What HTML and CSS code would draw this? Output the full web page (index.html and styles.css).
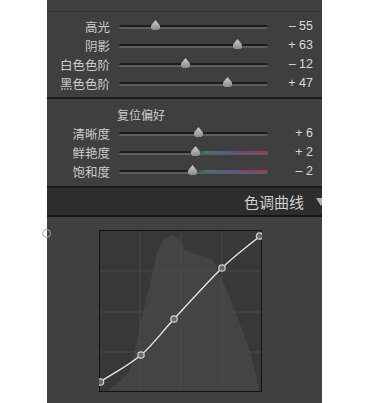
FILE: index.html
```html
<!DOCTYPE html>
<html lang="zh">
<head>
<meta charset="utf-8">
<link rel="stylesheet" href="styles.css">
</head>
<body>
<div class="panel">
  <div class="topstrip"></div>
  <div class="section s1">
    <div class="row"><span class="label">高光</span><div class="track"><span class="thumb" style="left:36px"></span></div><span class="val">– 55</span></div>
    <div class="row"><span class="label">阴影</span><div class="track"><span class="thumb" style="left:118px"></span></div><span class="val">+ 63</span></div>
    <div class="row"><span class="label">白色色阶</span><div class="track"><span class="thumb" style="left:66px"></span></div><span class="val">– 12</span></div>
    <div class="row"><span class="label">黑色色阶</span><div class="track"><span class="thumb" style="left:108px"></span></div><span class="val">+ 47</span></div>
  </div>
  <div class="section s2">
    <div class="row"><span class="label"></span><span class="reset">复位偏好</span><span class="val"></span></div>
    <div class="row"><span class="label">清晰度</span><div class="track"><span class="thumb" style="left:79px"></span></div><span class="val">+ 6</span></div>
    <div class="row"><span class="label">鲜艳度</span><div class="track color"><span class="thumb" style="left:76px"></span></div><span class="val">+ 2</span></div>
    <div class="row"><span class="label">饱和度</span><div class="track color"><span class="thumb" style="left:73px"></span></div><span class="val">– 2</span></div>
  </div>
  <div class="header"><span class="htitle">色调曲线</span><span class="tri"></span></div>
  <div class="curvepanel">
    <span class="pin"></span>
    <svg class="curve" width="163" height="162" viewBox="0 0 163 162">
      <rect x="0" y="0" width="163" height="162" fill="#383838"/>
      <path d="M8 161 L20 152 L30 142 L36 120 L41 94 L47 70 L53 45 L58 22 L64 10 L73 5 L80 10 L86 20 L95 24 L105 26 L114 30 L121 45 L128 61 L135 78 L141 94 L147 110 L152 125 L156 140 L160 161 Z" fill="#444444"/>
      <g stroke="#4a4a4a" stroke-width="1">
        <line x1="41" y1="0" x2="41" y2="162"/>
        <line x1="82" y1="0" x2="82" y2="162"/>
        <line x1="123" y1="0" x2="123" y2="162"/>
        <line x1="0" y1="41" x2="163" y2="41"/>
        <line x1="0" y1="82" x2="163" y2="82"/>
        <line x1="0" y1="122" x2="163" y2="122"/>
      </g>
      <rect x="0.5" y="0.5" width="162" height="161" fill="none" stroke="#111" stroke-width="1"/>
      <path d="M1 152 C14.7 143 29.7 135.5 42 125 C54.3 114.5 61.5 103.5 75 89 C88.5 74.5 108.7 51.8 123 38 C137.3 24.2 148.3 16.7 161 6" fill="none" stroke="#e6e6e6" stroke-width="1.4"/>
      <g fill="#6a6a6a" stroke="#cfcfcf" stroke-width="1.2">
        <circle cx="1.5" cy="152" r="3.2"/>
        <circle cx="42" cy="125" r="3.2"/>
        <circle cx="75" cy="89" r="3.2"/>
        <circle cx="123" cy="38" r="3.2"/>
        <circle cx="160.5" cy="6" r="3.2"/>
      </g>
    </svg>
  </div>
</div>
</body>
</html>
```
FILE: styles.css
```css
html, body {
  margin: 0;
  padding: 0;
  background: #ffffff;
}
body {
  width: 370px;
  height: 403px;
  overflow: hidden;
}
.panel {
  margin-left: 47px;
  width: 275px;
  height: 403px;
  background: #3f3f3f;
  display: flex;
  flex-direction: column;
  font-family: "Liberation Sans", "Noto Sans CJK SC", sans-serif;
  color: #cdcdcd;
}
.topstrip {
  height: 11px;
  border-bottom: 1px solid #363636;
  flex: none;
}
.section {
  padding: 5px 0;
  flex: none;
}
.s1 {
  border-bottom: 2px solid #1a1a1a;
  padding-bottom: 4px;
}
.s2 {
  padding-top: 6px;
  border-bottom: 2px solid #1a1a1a;
}
.row {
  display: grid;
  grid-template-columns: 63px 149px 1fr;
  column-gap: 9px;
  align-items: center;
  height: 19px;
}
.label {
  text-align: right;
  font-family: "Noto Sans CJK SC", sans-serif;
  font-size: 12.5px;
  color: #cbcbcb;
  line-height: 19px;
}
.reset {
  font-family: "Noto Sans CJK SC", sans-serif;
  font-size: 12px;
  color: #cbcbcb;
  margin-left: -2px;
  line-height: 19px;
}
.val {
  text-align: right;
  padding-right: 9px;
  font-size: 12.5px;
  color: #dadada;
  line-height: 19px;
}
.track {
  position: relative;
  height: 4px;
  border-radius: 2px;
  background: linear-gradient(#1c1c1c 0 50%, #5e5e5e 50% 100%);
  margin-top: 1px;
}
.track.color {
  background:
    linear-gradient(90deg, rgba(0,0,0,0) 0, rgba(0,0,0,0) 45%, #3f7a6e 58%, #4f5c9a 70%, #7a3f8c 84%, #b83050 100%) top/100% 50% no-repeat,
    linear-gradient(#1c1c1c 0 50%, #5e5e5e 50% 100%);
}
.thumb {
  position: absolute;
  top: -5px;
  width: 9px;
  height: 10px;
  margin-left: -4px;
  background: linear-gradient(#d0d0d0, #8a8a8a);
  clip-path: polygon(50% 0, 100% 55%, 100% 85%, 80% 100%, 20% 100%, 0 85%, 0 55%);
}
.header {
  height: 27px;
  background: #2d2d2d;
  border-bottom: 2px solid #151515;
  display: flex;
  align-items: center;
  justify-content: flex-end;
  gap: 12px;
  overflow: hidden;
  flex: none;
}
.htitle {
  font-family: "Noto Sans CJK SC", sans-serif;
  font-size: 15px;
  color: #cfcfcf;
  line-height: 27px;
}
.tri {
  width: 0;
  height: 0;
  border-left: 5px solid transparent;
  border-right: 5px solid transparent;
  border-top: 8px solid #b0b0b0;
  margin-right: -4px;
}
.curvepanel {
  position: relative;
  flex: 1;
  padding: 13px 0 0 52px;
  background: #414141;
}
.curve {
  display: block;
}
.pin {
  position: absolute;
  left: -5px;
  top: 12px;
  width: 7px;
  height: 7px;
  border: 1.5px solid #a8a8a8;
  border-radius: 50%;
}
```
